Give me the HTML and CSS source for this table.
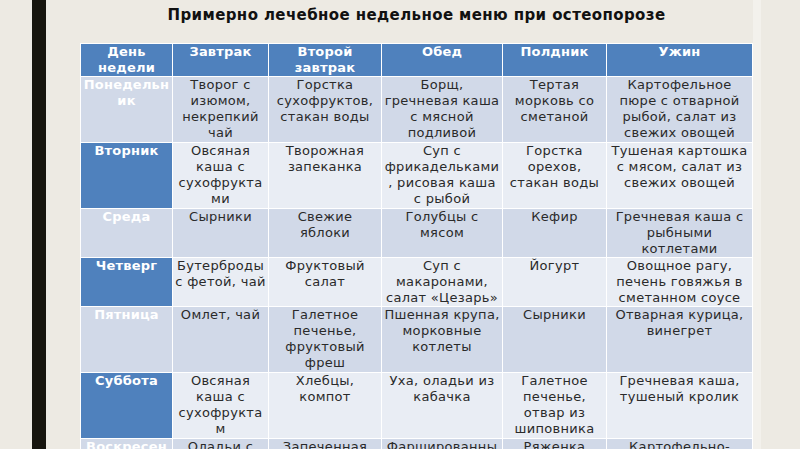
FILE: index.html
```html
<!DOCTYPE html>
<html lang="ru">
<head>
<meta charset="utf-8">
<link rel="stylesheet" href="styles.css">
</head>
<body>
<div class="slide">
  <div class="bar"></div>
  <div class="content">
    <h1 class="title">Примерно лечебное недельное меню при остеопорозе</h1>
    <table class="menu">
      <colgroup>
        <col class="c1"><col class="c2"><col class="c3"><col class="c4"><col class="c5"><col class="c6">
      </colgroup>
      <tr class="head">
        <th>День<br>недели</th><th>Завтрак</th><th>Второй<br>завтрак</th><th>Обед</th><th>Полдник</th><th>Ужин</th>
      </tr>
      <tr class="odd r66">
        <th>Понедельн<br>ик</th>
        <td>Творог с<br>изюмом,<br>некрепкий<br>чай</td>
        <td>Горстка<br>сухофруктов,<br>стакан воды</td>
        <td>Борщ,<br>гречневая каша<br>с мясной<br>подливой</td>
        <td>Тертая<br>морковь со<br>сметаной</td>
        <td>Картофельное<br>пюре с отварной<br>рыбой, салат из<br>свежих овощей</td>
      </tr>
      <tr class="even r66">
        <th>Вторник</th>
        <td>Овсяная<br>каша с<br>сухофрукта<br>ми</td>
        <td>Творожная<br>запеканка</td>
        <td>Суп с<br>фрикадельками<br>, рисовая каша<br>с рыбой</td>
        <td>Горстка<br>орехов,<br>стакан воды</td>
        <td>Тушеная картошка<br>с мясом, салат из<br>свежих овощей</td>
      </tr>
      <tr class="odd r49">
        <th>Среда</th>
        <td>Сырники</td>
        <td>Свежие<br>яблоки</td>
        <td>Голубцы с<br>мясом</td>
        <td>Кефир</td>
        <td>Гречневая каша с<br>рыбными<br>котлетами</td>
      </tr>
      <tr class="even r48">
        <th>Четверг</th>
        <td>Бутерброды<br>с фетой, чай</td>
        <td>Фруктовый<br>салат</td>
        <td>Суп с<br>макаронами,<br>салат «Цезарь»</td>
        <td>Йогурт</td>
        <td>Овощное рагу,<br>печень говяжья в<br>сметанном соусе</td>
      </tr>
      <tr class="odd r66">
        <th>Пятница</th>
        <td>Омлет, чай</td>
        <td>Галетное<br>печенье,<br>фруктовый<br>фреш</td>
        <td>Пшенная крупа,<br>морковные<br>котлеты</td>
        <td>Сырники</td>
        <td>Отварная курица,<br>винегрет</td>
      </tr>
      <tr class="even r66">
        <th>Суббота</th>
        <td>Овсяная<br>каша с<br>сухофрукта<br>м</td>
        <td>Хлебцы,<br>компот</td>
        <td>Уха, оладьи из<br>кабачка</td>
        <td>Галетное<br>печенье,<br>отвар из<br>шиповника</td>
        <td>Гречневая каша,<br>тушеный кролик</td>
      </tr>
      <tr class="odd last">
        <th>Воскресен</th>
        <td>Оладьи с</td>
        <td>Запеченная</td>
        <td>Фаршированны</td>
        <td>Ряженка</td>
        <td>Картофельно-</td>
      </tr>
    </table>
  </div>
  <div class="edge"></div>
</div>
</body>
</html>
```

FILE: styles.css
```css
html, body {
  margin: 0;
  padding: 0;
  background: #edeae3;
  overflow: hidden;
}
.slide {
  display: flex;
  width: 800px;
  height: 449px;
  overflow: hidden;
}
.bar {
  flex: 0 0 14px;
  margin-left: 32px;
  background: #17150e;
}
.content {
  flex: 0 0 672px;
  margin-left: 34px;
}
.edge {
  flex: 0 0 8px;
  background: #f3f1ec;
}
.title {
  margin: 5px 0 0 0;
  height: 38px;
  font-family: "DejaVu Sans", sans-serif;
  font-weight: bold;
  font-size: 15px;
  line-height: 20px;
  letter-spacing: 0.4px;
  color: #111;
  text-align: center;
}
.menu {
  width: 672px;
  table-layout: fixed;
  border-collapse: collapse;
  font-family: "DejaVu Sans", sans-serif;
  font-size: 13px;
  line-height: 16px;
  letter-spacing: 0.3px;
}
.c1 { width: 92px; }
.c2 { width: 96px; }
.c3 { width: 113px; }
.c4 { width: 121px; }
.c5 { width: 104px; }
.c6 { width: 146px; }
.menu th, .menu td {
  padding: 0;
  border: 1px solid #ffffff;
  text-align: center;
  vertical-align: top;
  white-space: nowrap;
  overflow: hidden;
}
.menu td {
  color: #2a2a2a;
}
.menu th {
  color: #ffffff;
  font-weight: bold;
  letter-spacing: 0.2px;
}
.head th {
  background: #4f81bd;
  height: 30px;
}
.odd td, .odd th { background: #d1d9e8; }
.even td { background: #e9edf4; }
.even th { background: #4f81bd; }
.r66 td, .r66 th { height: 65px; }
.r49 td, .r49 th { height: 48px; }
.r48 td, .r48 th { height: 47px; }
.last td, .last th { height: 16px; }
```
